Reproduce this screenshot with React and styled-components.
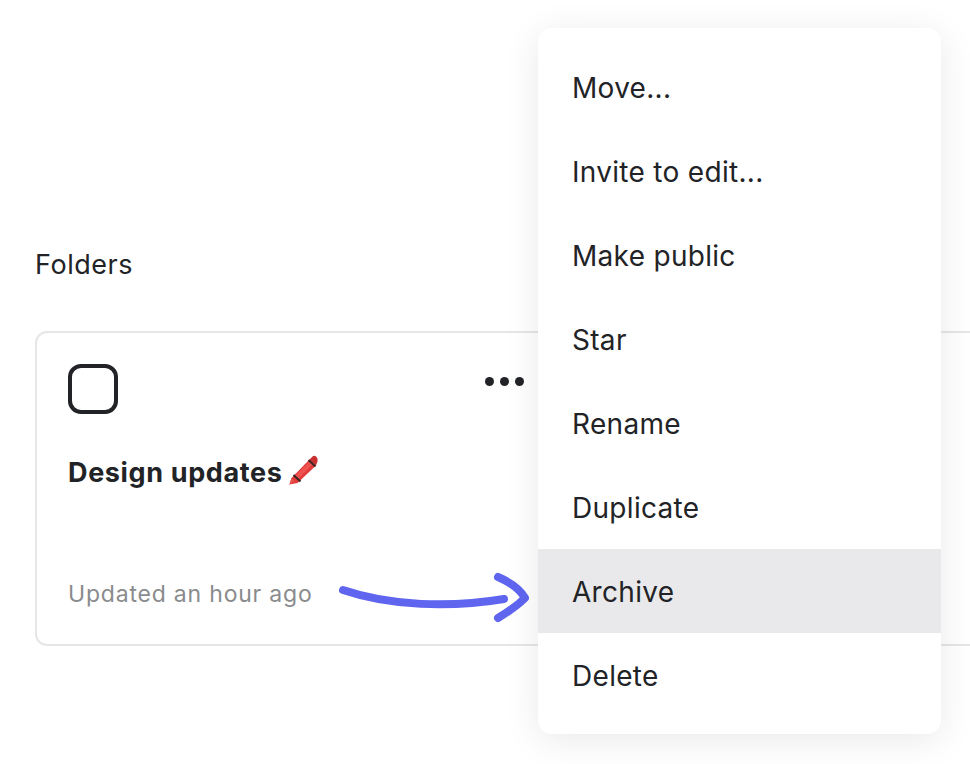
import React from 'react';
import styled, { createGlobalStyle } from 'styled-components';

const GlobalStyle = createGlobalStyle`
    html, body {
        margin: 0;
        padding: 0;
        background: #fff;
        overflow: hidden;
    }
    body {
        font-family: "Inter", "Liberation Sans", sans-serif;
        color: #222326;
    }
`;

const Page = styled.div`
    position: relative;
    width: 970px;
    height: 764px;
    overflow: hidden;
    padding: 247px 0 0 35px;
    box-sizing: border-box;
`;

const SectionTitle = styled.h2`
    margin: 0 0 48px;
    font-size: 27px;
    line-height: 36px;
    font-weight: 400;
    letter-spacing: 0.55px;
`;

const Card = styled.div`
    display: flex;
    flex-direction: column;
    box-sizing: border-box;
    width: 1000px;
    height: 315px;
    padding: 31px 31px 32px 31px;
    background: #fff;
    border: 2px solid #e6e6e7;
    border-radius: 12px;
`;

const CardHeader = styled.div`
    display: flex;
    align-items: flex-start;
    justify-content: space-between;
    width: 456px;
    height: 50px;
`;

const Checkbox = styled.div`
    box-sizing: border-box;
    width: 50px;
    height: 50px;
    border: 4px solid #222326;
    border-radius: 13px;
`;

const Dots = styled.div`
    display: flex;
    gap: 6px;
    margin-top: 13px;
`;

const Dot = styled.span`
    width: 9px;
    height: 9px;
    border-radius: 50%;
    background: #222326;
`;

const CardTitle = styled.div`
    display: flex;
    align-items: center;
    gap: 4px;
    margin-top: 39px;
    font-size: 27px;
    line-height: 36px;
    font-weight: 700;
    letter-spacing: 0.64px;
`;

const Crayon = styled.svg`
    margin-bottom: 5px;
`;

const CardMeta = styled.div`
    margin-top: auto;
    padding-bottom: 2px;
    font-size: 23px;
    line-height: 32px;
    color: #8a8b8d;
    letter-spacing: 0.8px;
`;

const Arrow = styled.svg`
    position: absolute;
    left: 330px;
    top: 562px;
`;

const Menu = styled.ul`
    position: absolute;
    left: 538px;
    top: 28px;
    width: 403px;
    margin: 0;
    padding: 17px 0;
    list-style: none;
    background: #fff;
    border-radius: 14px;
    box-shadow: 0 6px 36px rgba(0, 0, 0, 0.09);
`;

const MenuItem = styled.li`
    height: 84px;
    padding-left: 34px;
    font-size: 28px;
    line-height: 86px;
    letter-spacing: 0.3px;
    background: ${(p) => (p.$active ? '#e9e9eb' : 'transparent')};
`;

const items = ['Move...', 'Invite to edit...', 'Make public', 'Star', 'Rename', 'Duplicate', 'Archive', 'Delete'];

const CrayonIcon = () => (
    <Crayon width="32" height="34" viewBox="0 0 32 34">
        <path d="M2.5 31.5 L4.5 25 L22.5 6.5 L29 12.5 L10.5 30 Z" fill="#e23b3b" />
        <path d="M8 23 L24 7 L27 10 L11 26 Z" fill="#ef5350" />
        <path d="M22.5 6.5 L25.5 3.5 Q27.5 2 29.5 4 Q31.5 6 30.5 8.5 L29 12.5 Z" fill="#c92f2f" />
        <path d="M21.5 7 L28.5 13.5" stroke="#3a2422" strokeWidth="2" />
        <path d="M6.5 22 L13.5 28.5" stroke="#3a2422" strokeWidth="2" />
        <path d="M2.5 31.5 L4.5 25 L8 28.5 Z" fill="#e8504c" />
    </Crayon>
);

export default function App() {
    return (
        <Page>
            <GlobalStyle />
            <SectionTitle>Folders</SectionTitle>
            <Card>
                <CardHeader>
                    <Checkbox />
                    <Dots>
                        <Dot />
                        <Dot />
                        <Dot />
                    </Dots>
                </CardHeader>
                <CardTitle>
                    Design updates
                    <CrayonIcon />
                </CardTitle>
                <CardMeta>Updated an hour ago</CardMeta>
            </Card>
            <Arrow width="210" height="70" viewBox="0 0 210 70" fill="none" stroke="#5f65ef" strokeWidth="8" strokeLinecap="round" strokeLinejoin="round">
                <path d="M13 28 C60 44 120 46 174 37" />
                <path d="M168 15 C182 21 190 27 195 36 C188 43 178 50 168 56" />
            </Arrow>
            <Menu>
                {items.map((label) => (
                    <MenuItem key={label} $active={label === 'Archive'}>{label}</MenuItem>
                ))}
            </Menu>
        </Page>
    );
}
